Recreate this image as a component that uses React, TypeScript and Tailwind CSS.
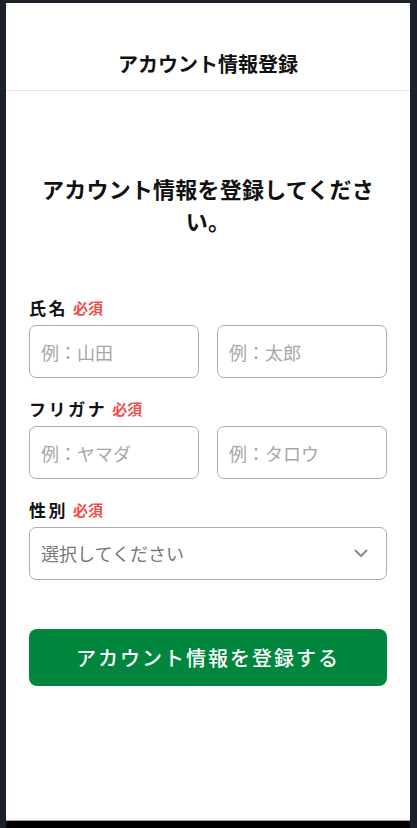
import React from "react";

const font = { fontFamily: '"Noto Sans CJK JP", "Noto Sans", sans-serif' };

function Label({ text }: { text: string }) {
  return (
    <div className="flex items-center gap-[5px] h-[24px]">
      <span className="text-[17px] font-bold tracking-[0.15em] text-[#111]">{text}</span>
      <span className="text-[15px] font-bold text-[#ef4b4b]">必須</span>
    </div>
  );
}

function Input({ placeholder }: { placeholder: string }) {
  return (
    <input
      placeholder={placeholder}
      style={font}
      className="w-full h-[53px] rounded-[7px] border border-[#adadad] px-[11px] text-[18px] placeholder:text-[#a6a6a6] outline-none"
    />
  );
}

export default function App() {
  return (
    <div style={font} className="w-[417px] h-[828px] bg-[#1b202b] pl-[6px] pr-[7px] pt-[3px] flex flex-col">
      <div className="flex-1 bg-white flex flex-col border-b border-[#a0a0a0]">
        <div className="pt-[47px] pb-[12px] border-b border-[#e3e3e3] flex justify-center">
          <h1 className="text-[20px] leading-[28px] font-bold text-[#111]">アカウント情報登録</h1>
        </div>
        <div className="px-[23px]">
          <h2 className="mt-[81px] text-center text-[22px] leading-[32px] font-bold text-[#111] tracking-[0.01em]">
            アカウント情報を登録してください。
          </h2>
          <div className="mt-[60px]">
            <Label text="氏名" />
            <div className="mt-[5px] grid grid-cols-2 gap-[18px]">
              <Input placeholder="例：山田" />
              <Input placeholder="例：太郎" />
            </div>
          </div>
          <div className="mt-[19px]">
            <Label text="フリガナ" />
            <div className="mt-[5px] grid grid-cols-2 gap-[18px]">
              <Input placeholder="例：ヤマダ" />
              <Input placeholder="例：タロウ" />
            </div>
          </div>
          <div className="mt-[19px]">
            <Label text="性別" />
            <div className="mt-[5px] relative h-[53px] rounded-[7px] border border-[#adadad] flex items-center justify-between pl-[11px] pr-[18px]">
              <span className="text-[18px] text-[#777]">選択してください</span>
              <svg width="14" height="9" viewBox="0 0 14 9" fill="none">
                <path d="M1.5 1.5 L7 7 L12.5 1.5" stroke="#8a8a8a" strokeWidth="2" strokeLinecap="round" strokeLinejoin="round" />
              </svg>
            </div>
          </div>
          <button className="mt-[49px] w-full h-[57px] rounded-[8px] bg-[#00873d] text-white text-[20px] font-medium tracking-[0.1em] flex items-center justify-center">
            アカウント情報を登録する
          </button>
        </div>
      </div>
      <div className="h-[7px] bg-black" />
    </div>
  );
}
